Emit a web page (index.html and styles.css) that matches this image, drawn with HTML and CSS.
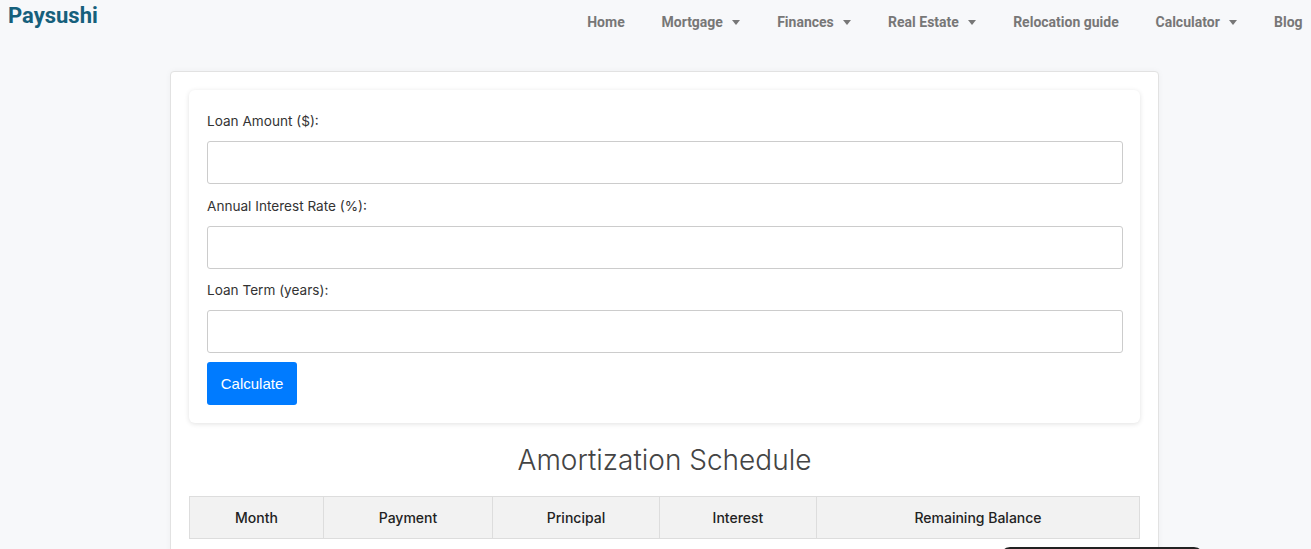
FILE: index.html
```html
<!DOCTYPE html>
<html lang="en">
<head>
    <meta charset="UTF-8">
    <meta name="viewport" content="width=device-width, initial-scale=1.0">
    <title>Amortization Calculator - Paysushi</title>
    <link rel="stylesheet" href="styles.css">
</head>
<body>
    <header class="top">
        <a class="logo" href="#">Paysushi</a>
        <ul class="nav">
            <li>Home</li>
            <li>Mortgage <span class="caret"></span></li>
            <li>Finances <span class="caret"></span></li>
            <li>Real Estate <span class="caret"></span></li>
            <li>Relocation guide</li>
            <li>Calculator <span class="caret"></span></li>
            <li>Blog</li>
        </ul>
    </header>
    <div class="wrap">
        <div class="card">
            <form class="calc">
                <label for="amount">Loan Amount ($):</label>
                <input type="text" id="amount">
                <label for="rate">Annual Interest Rate (%):</label>
                <input type="text" id="rate">
                <label for="term">Loan Term (years):</label>
                <input type="text" id="term">
                <button type="button" class="btn">Calculate</button>
            </form>
            <h2 class="title">Amortization Schedule</h2>
            <table class="schedule">
                <thead>
                    <tr>
                        <th class="c1">Month</th>
                        <th class="c2">Payment</th>
                        <th class="c3">Principal</th>
                        <th class="c4">Interest</th>
                        <th>Remaining Balance</th>
                    </tr>
                </thead>
                <tbody></tbody>
            </table>
        </div>
    </div>
    <div class="float-bar"></div>
</body>
</html>
```

FILE: styles.css
```css
body,ul,li,h2{
    margin: 0;
    padding: 0;
    list-style: none;
}
body{
    background: #f7f8fa;
    font-family: Inter, "Noto Sans", sans-serif;
    color: #333;
    overflow: hidden;
}
.top{
    display: flex;
    justify-content: space-between;
    align-items: flex-start;
    height: 44px;
}
.logo{
    font-family: Roboto, sans-serif;
    font-weight: 700;
    font-size: 22px;
    color: #16607c;
    text-decoration: none;
    padding: 3px 0 0 8px;
}
.nav{
    display: flex;
    padding-top: 14px;
    margin-right: -10px;
}
.nav li{
    font-family: Roboto, sans-serif;
    font-weight: 700;
    font-size: 14px;
    color: #777;
    padding: 0 18.4px;
    white-space: nowrap;
}
.caret{
    display: inline-block;
    width: 0;
    height: 0;
    border-left: 4px solid transparent;
    border-right: 4px solid transparent;
    border-top: 5px solid #777;
    margin-left: 6px;
    vertical-align: 2px;
}
.wrap{
    padding: 27px 0 0 18px;
}
.card{
    width: 951px;
    margin: 0 auto;
    background: #fff;
    border: 1px solid #e2e2e2;
    border-radius: 4px;
    box-shadow: 0 0 6px rgba(0,0,0,0.04);
    padding: 18px 18px 0 18px;
    height: 520px;
}
.calc{
    display: flex;
    flex-direction: column;
    align-items: flex-start;
    padding: 21px 17px 18px 18px;
    border-radius: 6px;
    box-shadow: 0 1px 5px rgba(0,0,0,0.12);
}
.calc label{
    font-size: 13.6px;
    line-height: 20px;
    color: #333;
    margin-bottom: 10px;
}
.calc input{
    width: 100%;
    box-sizing: border-box;
    height: 43px;
    border: 1px solid #ccc;
    border-radius: 3px;
    margin: 0 0 11.5px 0;
    font-size: 14px;
}
.btn{
    margin-top: -3px;
    width: 90px;
    height: 43px;
    background: #007bff;
    color: #fff;
    border: none;
    border-radius: 3px;
    font-family: "Liberation Sans", Arial, sans-serif;
    font-size: 15px;
}
.title{
    text-align: center;
    font-weight: 300;
    font-size: 28px;
    color: #444;
    margin: 19px 0 18px;
    line-height: 36px;
}
.schedule{
    width: 100%;
    border-collapse: collapse;
}
.schedule th{
    background: #f2f2f2;
    border: 1px solid #ddd;
    height: 41px;
    font-size: 14px;
    font-weight: 500;
    color: #222;
    text-align: center;
    padding: 0 8px;
}
.schedule .c1{ width: 117px; }
.schedule .c2{ width: 152px; }
.schedule .c3{ width: 150px; }
.schedule .c4{ width: 140px; }
.float-bar{
    position: fixed;
    left: 1000px;
    top: 547px;
    width: 204px;
    height: 20px;
    background: #222;
    border-radius: 10px 10px 0 0;
}
```
